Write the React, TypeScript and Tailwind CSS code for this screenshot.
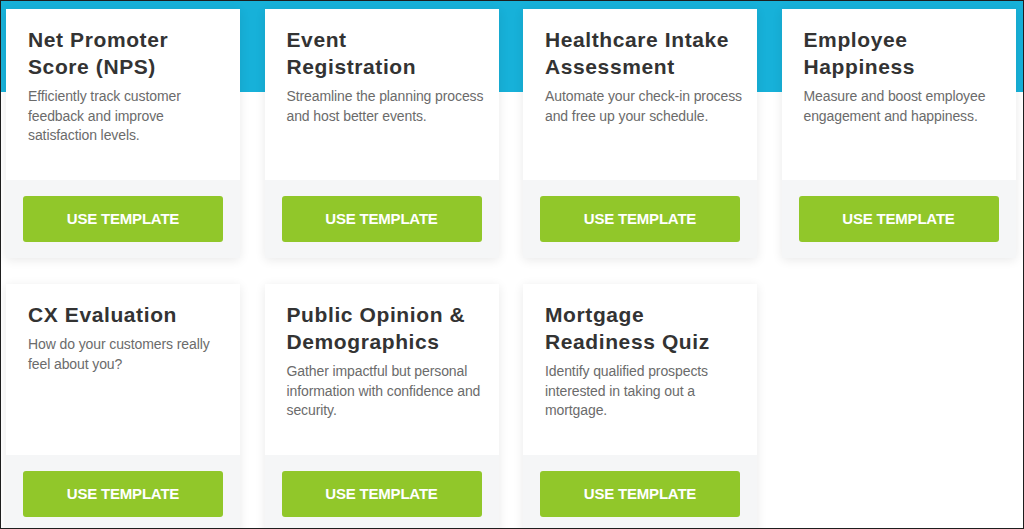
const templates = [
  {
    title: "Net Promoter Score (NPS)",
    description: "Efficiently track customer feedback and improve satisfaction levels.",
  },
  {
    title: "Event Registration",
    description: "Streamline the planning process and host better events.",
  },
  {
    title: "Healthcare Intake Assessment",
    description: "Automate your check-in process and free up your schedule.",
  },
  {
    title: "Employee Happiness",
    description: "Measure and boost employee engagement and happiness.",
  },
  {
    title: "CX Evaluation",
    description: "How do your customers really feel about you?",
  },
  {
    title: "Public Opinion & Demographics",
    description: "Gather impactful but personal information with confidence and security.",
  },
  {
    title: "Mortgage Readiness Quiz",
    description: "Identify qualified prospects interested in taking out a mortgage.",
  },
];

const TemplateCard = ({ title, description }: { title: string; description: string }) => {
  return (
    <div className="flex flex-col bg-white shadow-[0_2px_10px_rgba(0,0,0,0.09)]">
      <div className="h-[171px] pl-[22px] pr-[12px] pt-[17px]">
        <h3 className="pr-[6px] text-[21px] leading-[27px] font-bold tracking-[0.6px] text-[#333333]">{title}</h3>
        <p className="mt-[7px] text-[14px] leading-[19.5px] tracking-[-0.1px] text-[#6b6b6b]">{description}</p>
      </div>
      <div className="h-[78px] bg-[#f5f6f7] px-[17px] pt-[16px]">
        <button className="flex h-[46px] w-full items-center justify-center rounded-[3px] bg-[#91c72a] text-[15px] font-bold tracking-[-0.2px] text-white">
          USE TEMPLATE
        </button>
      </div>
    </div>
  );
};

export default function App() {
  return (
    <div
      className="h-[529px] w-[1024px] overflow-hidden border border-[#1e1e1e] bg-[linear-gradient(to_bottom,#17b1d9_91px,#ffffff_91px)] pl-[5px] pt-[8px]"
      style={{ fontFamily: '"Liberation Sans", Arial, sans-serif' }}
    >
      <div className="grid grid-cols-[repeat(4,234px)] gap-x-[24.5px] gap-y-[26px]">
        {templates.map((t) => (
          <TemplateCard key={t.title} title={t.title} description={t.description} />
        ))}
      </div>
    </div>
  );
}
